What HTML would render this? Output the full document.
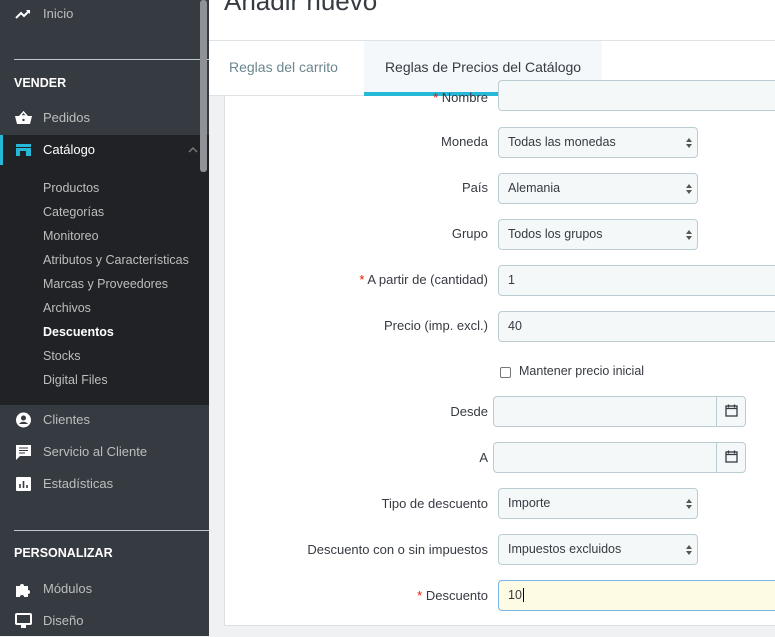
<!DOCTYPE html>
<html><head><meta charset="utf-8"><style>
*{box-sizing:border-box;margin:0;padding:0}
body{width:775px;height:636px;overflow:hidden;font-family:"Liberation Sans",sans-serif;font-size:13px;background:#eff1f2;position:relative}
.sb{position:absolute;left:0;top:0;width:209px;height:636px;background:#363a41;color:#bebebe}
.it{position:absolute;left:0;width:209px;height:32px;line-height:32px;padding-left:43px;font-size:13px;color:#bebebe}
.ic{position:absolute;left:15px;top:8px;width:17px;height:16px}
.sec{position:absolute;left:14px;color:#fff;font-weight:bold;font-size:12.5px}
.hr{position:absolute;left:14px;width:195px;height:1px;background:#bcc8cc}
.cat{position:absolute;left:0;top:135px;width:209px;height:270px;background:#202226}
.sub{position:absolute;left:43px;font-size:12.5px;color:#bebebe}
.scroll{position:absolute;left:200px;top:0;width:7px;height:172px;background:#8f9296;border-radius:3px}
.main{position:absolute;left:209px;top:0;width:566px;height:636px}
.hdr{position:absolute;left:0;top:0;width:566px;height:41px;background:#fff;border-bottom:1px solid #dfe3e6}
.title{position:absolute;left:15px;top:-14px;font-size:26px;color:#363a41}
.tabs{position:absolute;left:0;top:41px;width:566px;height:55px;background:#fff;border-bottom:1px solid #dfe3e6}
.tab{position:absolute;top:0;height:55px;line-height:52px;font-size:14px}
.panel{position:absolute;left:15px;top:96px;width:560px;height:530px;background:#fff;border-left:1px solid #dbe0e3;border-bottom:1px solid #dbe0e3}
.lbl{position:absolute;right:296px;font-size:13px;color:#363a41;text-align:right;white-space:nowrap}
.lbl b{color:#e10;font-weight:normal}
.in{position:absolute;left:273px;height:31px;background:#f5f8f9;border:1px solid #bbcdd2;border-radius:4px;line-height:29px;padding-left:9px;font-size:12.5px;color:#363a41}
.sel{width:200px}
.sel:after{content:"";position:absolute;right:5px;top:10px;border-left:3px solid transparent;border-right:3px solid transparent;border-bottom:4px solid #555}
.sel:before{content:"";position:absolute;right:5px;top:16px;border-left:3px solid transparent;border-right:3px solid transparent;border-top:4px solid #555}
.wide{width:300px}
.date{left:268px;width:253px}
.date i{position:absolute;right:0;top:0;width:29px;height:29px;border-left:1px solid #bbcdd2}
</style></head><body>
<div class="sb">
 <div class="it" style="top:-2px"><svg class="ic" viewBox="0 0 17 16"><path d="M1 12l5-5 3 3 5-5" stroke="#fff" stroke-width="2" fill="none"/><path d="M11 4h4v4z" fill="#fff"/></svg>Inicio</div>
 <div class="hr" style="top:59px"></div>
 <div class="sec" style="top:76px">VENDER</div>
 <div class="it" style="top:102px;color:#bebebe"><svg class="ic" viewBox="0 0 17 16"><path d="M5 6l3.5-4L12 6z" fill="none" stroke="#fff" stroke-width="1.5"/><path d="M0 6h17l-2 8H2z" fill="#fff"/><circle cx="8.5" cy="10" r="1.2" fill="#363a41"/></svg>Pedidos</div>
 <div class="cat"></div>
 <div style="position:absolute;left:0;top:135px;width:3px;height:30px;background:#25b9d7"></div>
 <div class="it" style="top:134px;color:#fff"><svg class="ic" viewBox="0 0 17 16"><rect x="1" y="2" width="15" height="3" fill="#25b9d7"/><rect x="1" y="6" width="15" height="8" fill="#25b9d7"/><rect x="5" y="9" width="6" height="5" fill="#202226"/></svg>Catálogo<svg style="position:absolute;left:188px;top:12px" width="10" height="7" viewBox="0 0 10 7"><path d="M1 6l4-4 4 4" stroke="#777" stroke-width="1.5" fill="none"/></svg></div>
 <div class="sub" style="top:181px">Productos</div>
 <div class="sub" style="top:205px">Categorías</div>
 <div class="sub" style="top:229px">Monitoreo</div>
 <div class="sub" style="top:253px">Atributos y Características</div>
 <div class="sub" style="top:277px">Marcas y Proveedores</div>
 <div class="sub" style="top:301px">Archivos</div>
 <div class="sub" style="top:325px;color:#fff;font-weight:bold">Descuentos</div>
 <div class="sub" style="top:349px">Stocks</div>
 <div class="sub" style="top:373px">Digital Files</div>
 <div class="it" style="top:404px"><svg class="ic" viewBox="0 0 17 16"><circle cx="8.5" cy="8" r="7.5" fill="#fff"/><circle cx="8.5" cy="6" r="2.5" fill="#363a41"/><path d="M4 12c2-3 7-3 9 0" fill="#363a41"/></svg>Clientes</div>
 <div class="it" style="top:436px"><svg class="ic" viewBox="0 0 17 16"><path d="M1 1h15v11H5l-4 4z" fill="#fff"/><path d="M4 4h9M4 6.5h9M4 9h6" stroke="#363a41"/></svg>Servicio al Cliente</div>
 <div class="it" style="top:468px"><svg class="ic" viewBox="0 0 17 16"><rect x="1" y="1" width="15" height="14" rx="1" fill="#fff"/><path d="M5 12V8M8.5 12V5M12 12V9" stroke="#363a41" stroke-width="1.6"/></svg>Estadísticas</div>
 <div class="hr" style="top:530px"></div>
 <div class="sec" style="top:546px">PERSONALIZAR</div>
 <div class="it" style="top:573px"><svg class="ic" viewBox="0 0 17 16"><path d="M1 5h4a2 2 0 1 1 4 0h4v4a2 2 0 1 1 0 4v3H9a2 2 0 1 0-4 0H1z" fill="#fff"/></svg>Módulos</div>
 <div class="it" style="top:605px"><svg class="ic" viewBox="0 0 17 16"><rect x="1" y="1" width="15" height="10" rx="1" fill="none" stroke="#fff" stroke-width="2"/><rect x="6" y="12" width="5" height="3" fill="#fff"/></svg>Diseño</div>
 <div class="scroll"></div>
</div>
<div class="main">
 <div class="hdr"><div class="title">Añadir nuevo</div></div>
 <div class="tabs">
  <div class="tab" style="left:20px;color:#6c868e">Reglas del carrito</div>
  <div class="tab" style="left:155px;width:238px;background:#f4f8fb;color:#363a41;text-align:center;border-bottom:4px solid #25b9d7">Reglas de Precios del Catálogo</div>
 </div>
 <div class="panel">
  <div class="lbl" style="top:-6px"><b>*</b> Nombre</div>
  <div class="in wide" style="top:-16px;height:31px"></div>
  <div class="lbl" style="top:38px">Moneda</div><div class="in sel" style="top:31px">Todas las monedas</div>
  <div class="lbl" style="top:84px">País</div><div class="in sel" style="top:77px">Alemania</div>
  <div class="lbl" style="top:130px">Grupo</div><div class="in sel" style="top:123px">Todos los grupos</div>
  <div class="lbl" style="top:176px"><b>*</b> A partir de (cantidad)</div><div class="in wide" style="top:169px">1</div>
  <div class="lbl" style="top:222px">Precio (imp. excl.)</div><div class="in wide" style="top:215px">40</div>
  <div style="position:absolute;left:275px;top:271px;width:11px;height:11px;border:1px solid #777;border-radius:2px;background:#fff"></div>
  <div style="position:absolute;left:294px;top:268px;font-size:12.5px;color:#363a41">Mantener precio inicial</div>
  <div class="lbl" style="top:308px">Desde</div><div class="in date" style="top:300px"><i><svg width="29" height="29" viewBox="0 0 29 29"><rect x="9" y="9" width="11" height="10" fill="none" stroke="#363a41" stroke-width="1.3"/><path d="M9 11.5h11M11.5 7.5v3M17.5 7.5v3" stroke="#363a41" stroke-width="1.3"/></svg></i></div>
  <div class="lbl" style="top:354px">A</div><div class="in date" style="top:346px"><i><svg width="29" height="29" viewBox="0 0 29 29"><rect x="9" y="9" width="11" height="10" fill="none" stroke="#363a41" stroke-width="1.3"/><path d="M9 11.5h11M11.5 7.5v3M17.5 7.5v3" stroke="#363a41" stroke-width="1.3"/></svg></i></div>
  <div class="lbl" style="top:400px">Tipo de descuento</div><div class="in sel" style="top:392px">Importe</div>
  <div class="lbl" style="top:446px">Descuento con o sin impuestos</div><div class="in sel" style="top:438px">Impuestos excluidos</div>
  <div class="lbl" style="top:492px"><b>*</b> Descuento</div><div class="in wide" style="top:484px;background:#fefbe4;border-color:#7cb5e4">10<span style="border-left:1px solid #000;margin-left:1px"></span></div>
 </div>
</div>
</body></html>
